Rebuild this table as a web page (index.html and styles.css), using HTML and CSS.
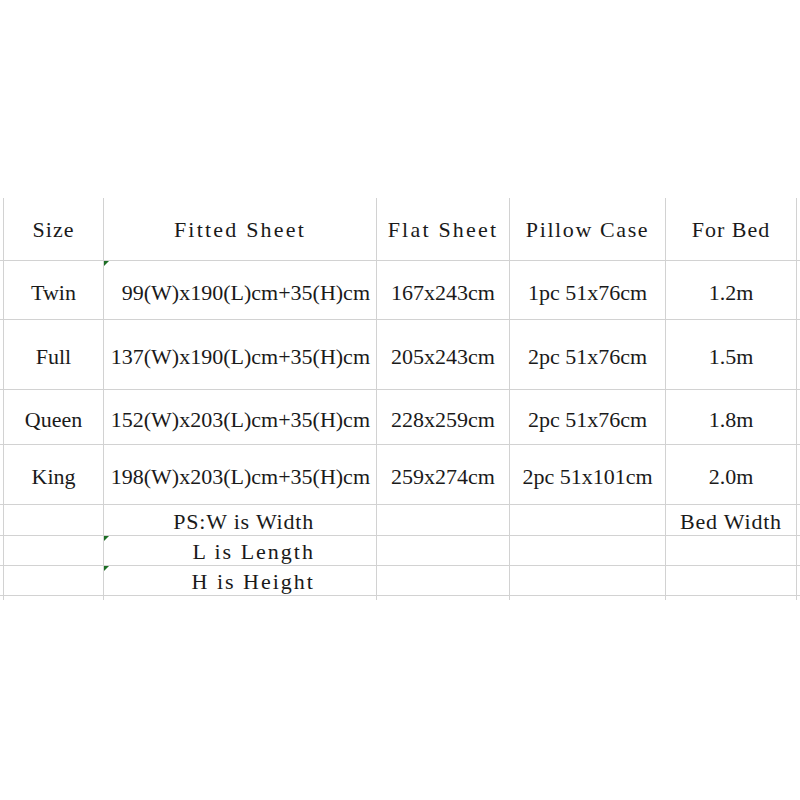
FILE: index.html
```html
<!DOCTYPE html>
<html>
<head>
<meta charset="utf-8">
<link rel="stylesheet" href="styles.css">
</head>
<body>
<div class="page">
  <div class="sheet">
    <div class="c edge"></div>
    <div class="c head s1">Size</div>
    <div class="c head s3">Fitted Sheet</div>
    <div class="c head s3">Flat Sheet</div>
    <div class="c head s2">Pillow Case</div>
    <div class="c head s1">For Bed</div>
    <div class="c last"></div>

    <div class="c edge"></div>
    <div class="c data">Twin</div>
    <div class="c data right flag">99(W)x190(L)cm+35(H)cm</div>
    <div class="c data">167x243cm</div>
    <div class="c data">1pc 51x76cm</div>
    <div class="c data">1.2m</div>
    <div class="c last"></div>

    <div class="c edge"></div>
    <div class="c data">Full</div>
    <div class="c data right">137(W)x190(L)cm+35(H)cm</div>
    <div class="c data">205x243cm</div>
    <div class="c data">2pc 51x76cm</div>
    <div class="c data">1.5m</div>
    <div class="c last"></div>

    <div class="c edge"></div>
    <div class="c data">Queen</div>
    <div class="c data right">152(W)x203(L)cm+35(H)cm</div>
    <div class="c data">228x259cm</div>
    <div class="c data">2pc 51x76cm</div>
    <div class="c data">1.8m</div>
    <div class="c last"></div>

    <div class="c edge"></div>
    <div class="c data">King</div>
    <div class="c data right">198(W)x203(L)cm+35(H)cm</div>
    <div class="c data">259x274cm</div>
    <div class="c data">2pc 51x101cm</div>
    <div class="c data">2.0m</div>
    <div class="c last"></div>

    <div class="c edge"></div>
    <div class="c"></div>
    <div class="c note legend">PS:W is Width</div>
    <div class="c"></div>
    <div class="c"></div>
    <div class="c note">Bed Width</div>
    <div class="c last"></div>

    <div class="c edge"></div>
    <div class="c"></div>
    <div class="c note legend wide flag">L is Length</div>
    <div class="c"></div>
    <div class="c"></div>
    <div class="c"></div>
    <div class="c last"></div>

    <div class="c edge"></div>
    <div class="c"></div>
    <div class="c note legend wide flag">H is Height</div>
    <div class="c"></div>
    <div class="c"></div>
    <div class="c"></div>
    <div class="c last"></div>

    <div class="c edge tail"></div>
    <div class="c tail"></div>
    <div class="c tail"></div>
    <div class="c tail"></div>
    <div class="c tail"></div>
    <div class="c tail"></div>
    <div class="c last tail"></div>
  </div>
</div>
</body>
</html>
```

FILE: styles.css
```css
html, body {
  margin: 0;
  padding: 0;
  background: #ffffff;
}

.page {
  width: 800px;
  height: 800px;
  padding-top: 198px;
  box-sizing: border-box;
  font-family: "Liberation Serif", "Times New Roman", serif;
  font-size: 22px;
  line-height: 1;
  color: #1a1a1a;
}

.sheet {
  display: grid;
  grid-template-columns: 4px 100px 273px 133px 156px 131px 1fr;
  grid-template-rows: 63px 59px 70px 55px 60px 31px 30px 30px 4px;
}

.c {
  position: relative;
  box-sizing: border-box;
  border-right: 1px solid #d2d2d2;
  border-bottom: 1px solid #d2d2d2;
  display: flex;
  align-items: center;
  justify-content: center;
  white-space: pre;
  padding-top: 1px;
}

.c.head.s1 { letter-spacing: 1px; }
.c.head.s2 { letter-spacing: 1.6px; }
.c.head.s3 { letter-spacing: 2.2px; }

.c.data {
  padding-top: 5px;
}

.c.note {
  padding-top: 3px;
  letter-spacing: 0.8px;
}

.c.legend {
  justify-content: flex-end;
  padding-right: 62px;
}

.c.legend.wide {
  letter-spacing: 2px;
  padding-right: 61px;
}

.c.right {
  justify-content: flex-end;
  padding-right: 6px;
}

.c.last {
  border-right: none;
}

.c.tail {
  border-bottom: none;
}

.flag::before {
  content: "";
  position: absolute;
  left: 0;
  top: 0;
  width: 0;
  height: 0;
  border-top: 5px solid #1d6e25;
  border-right: 5px solid transparent;
}
```
